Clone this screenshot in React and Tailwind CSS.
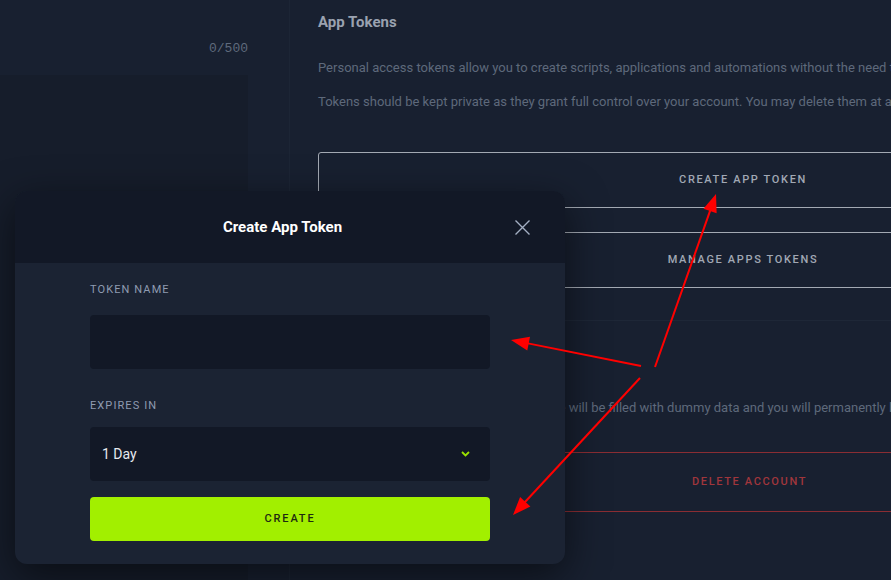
import React from "react";

// red annotation arrow: line from tail to tip, filled head at the tip
function Arrow({ from, to }) {
  const [x1, y1] = from;
  const [x2, y2] = to;
  const len = Math.hypot(x2 - x1, y2 - y1);
  const ux = (x2 - x1) / len;
  const uy = (y2 - y1) / len;
  const hl = 18;
  const hw = 7;
  const bx = x2 - ux * hl;
  const by = y2 - uy * hl;
  const pts = `${x2},${y2} ${bx - uy * hw},${by + ux * hw} ${bx + uy * hw},${by - ux * hw}`;
  return (
    <g>
      <line x1={x1} y1={y1} x2={bx + ux * 2} y2={by + uy * 2} stroke="#ff0000" strokeWidth="2" />
      <polygon points={pts} fill="#ff0000" />
    </g>
  );
}

function OutlineButton({ children, className }) {
  return (
    <div
      className={`flex items-center justify-center border rounded-[3px] text-[11px] font-medium tracking-[0.15em] uppercase ${className}`}
    >
      {children}
    </div>
  );
}

export default function App() {
  return (
    <div className="relative w-[891px] h-[580px] overflow-hidden bg-[#182030] font-['Roboto',sans-serif]">
      <div className="flex h-full">
        {/* left column */}
        <div className="w-[290px] shrink-0 border-r border-[#1c2535] pr-[41px] pt-[41px]">
          <div className="text-right text-[13px] leading-[16px] text-[#5f6a7c] font-['Liberation_Mono',monospace]">
            0/500
          </div>
          <div className="mt-[18px] h-[600px] bg-[#161d2b]" />
        </div>

        {/* right column */}
        <div className="flex-1 pl-[28px] pt-[13px] whitespace-nowrap">
          <h2 className="text-[15px] leading-[18px] font-bold text-[#9aa2b0]">App Tokens</h2>
          <p className="mt-[27px] text-[13px] leading-[20px] text-[#5e697b]">
            Personal access tokens allow you to create scripts, applications and automations without the need to share your password.
          </p>
          <p className="mt-[14px] text-[13px] leading-[20px] text-[#5e697b]">
            Tokens should be kept private as they grant full control over your account. You may delete them at any time.
          </p>

          <OutlineButton className="mt-[40px] h-[56px] w-[850px] border-[#a3a9b3] text-[#a1a8b4]">
            Create App Token
          </OutlineButton>
          <OutlineButton className="mt-[24px] h-[56px] w-[850px] border-[#a3a9b3] text-[#a1a8b4]">
            Manage Apps Tokens
          </OutlineButton>

          <div className="mt-[32px] w-[900px] border-t border-[#1e2737]" />

          <h2 className="mt-[39px] text-[15px] leading-[18px] font-bold text-[#9aa2b0]">Delete Account</h2>
          <p className="mt-[20px] text-[13px] leading-[20px] text-[#5e697b]">
            If you delete your account, your user profile will be filled with dummy data and you will permanently lose access to it.
          </p>

          <OutlineButton className="mt-[34px] h-[60px] w-[863px] border-[#8a2d33] text-[#a0363c]">
            Delete Account
          </OutlineButton>
        </div>
      </div>

      {/* modal */}
      <div className="absolute left-[15px] top-[191px] w-[550px] h-[373px] rounded-[12px] overflow-hidden bg-[#1b2333] shadow-[0_12px_40px_rgba(0,0,0,0.55)]">
        <div className="h-[72px] bg-[#121826] flex items-center px-[35px]">
          <div className="flex-1 text-center text-[15px] font-bold text-white">Create App Token</div>
          <svg width="15" height="15" viewBox="0 0 15 15" className="shrink-0">
            <path d="M0.5 0.5L14.5 14.5M14.5 0.5L0.5 14.5" stroke="#a4afc3" strokeWidth="1.4" fill="none" />
          </svg>
        </div>
        <div className="px-[75px] pt-[20px]">
          <div className="text-[11px] leading-[13px] tracking-[0.1em] text-[#8f9bb1]">TOKEN NAME</div>
          <div className="mt-[19px] h-[54px] rounded-[4px] bg-[#121826]" />

          <div className="mt-[30px] text-[11px] leading-[13px] tracking-[0.1em] text-[#8f9bb1]">EXPIRES IN</div>
          <div className="mt-[15px] h-[54px] rounded-[4px] bg-[#121826] flex items-center justify-between pl-[12px] pr-[20px]">
            <span className="text-[14px] text-[#e6e9ee]">1 Day</span>
            <svg width="9" height="6" viewBox="0 0 9 6">
              <path d="M1 1L4.5 4.5L8 1" stroke="#9be000" strokeWidth="1.8" fill="none" />
            </svg>
          </div>

          <div className="mt-[16px] h-[44px] rounded-[4px] bg-[#a2ef00] flex items-center justify-center text-[11px] font-medium tracking-[0.17em] text-[#1d2a10]">
            CREATE
          </div>
        </div>
      </div>

      {/* annotations */}
      <svg className="absolute inset-0 pointer-events-none" width="891" height="580">
        <Arrow from={[655, 367]} to={[716, 194]} />
        <Arrow from={[641, 366]} to={[511, 340]} />
        <Arrow from={[640, 378]} to={[513, 515]} />
      </svg>
    </div>
  );
}
